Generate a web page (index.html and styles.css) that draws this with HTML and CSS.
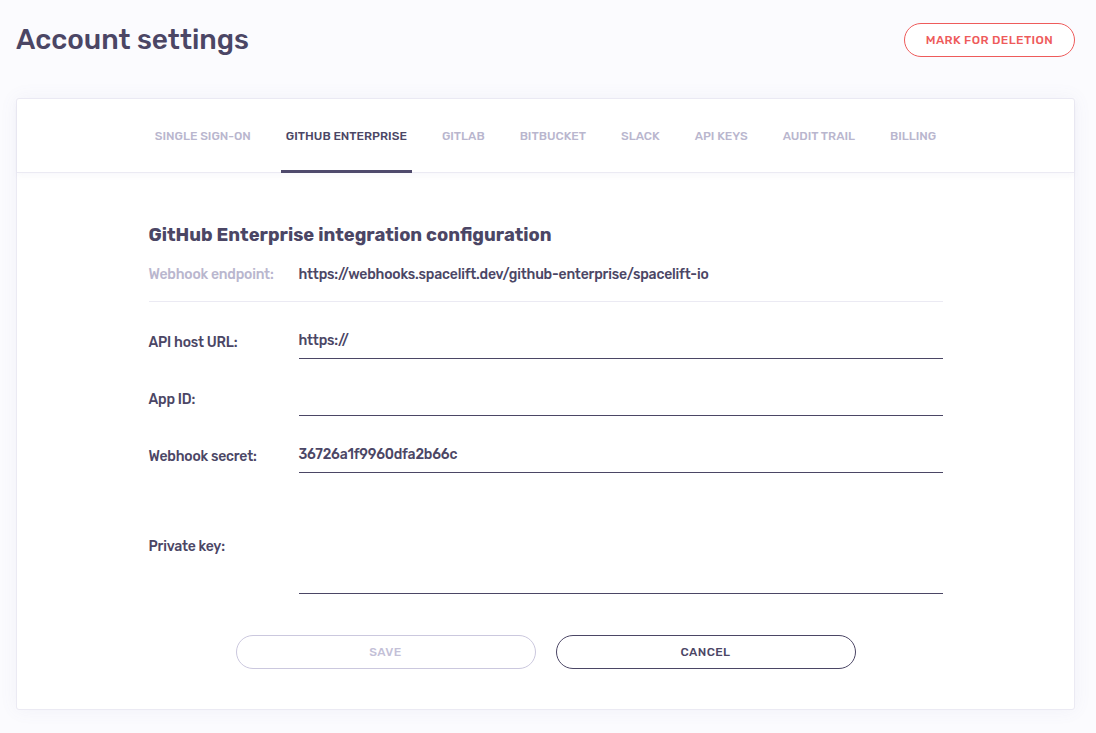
FILE: index.html
```html
<!DOCTYPE html>
<html lang="en">
<head>
<meta charset="utf-8">
<title>Account settings</title>
<link rel="stylesheet" href="styles.css">
</head>
<body>
<div class="page">
  <header class="header">
    <h1 class="title">Account settings</h1>
    <button class="btn btn-danger" type="button">Mark for deletion</button>
  </header>

  <section class="card">
    <nav class="tabs">
      <a class="tab">Single sign-on</a>
      <a class="tab tab-active">GitHub Enterprise</a>
      <a class="tab">GitLab</a>
      <a class="tab">Bitbucket</a>
      <a class="tab">Slack</a>
      <a class="tab">API keys</a>
      <a class="tab">Audit trail</a>
      <a class="tab">Billing</a>
    </nav>

    <div class="form">
      <h2 class="form-title">GitHub Enterprise integration configuration</h2>
      <div class="info-row">
        <span class="info-label">Webhook endpoint:</span>
        <span class="info-value">https://webhooks.spacelift.dev/github-enterprise/spacelift-io</span>
      </div>

      <div class="field">
        <label class="field-label">API host URL:</label>
        <div class="field-input">https://</div>
      </div>
      <div class="field">
        <label class="field-label">App ID:</label>
        <div class="field-input"></div>
      </div>
      <div class="field">
        <label class="field-label">Webhook secret:</label>
        <div class="field-input">36726a1f9960dfa2b66c</div>
      </div>
      <div class="field field-area">
        <label class="field-label">Private key:</label>
        <div class="field-input field-textarea"></div>
      </div>

      <div class="actions">
        <button class="btn btn-wide btn-disabled" type="button">Save</button>
        <button class="btn btn-wide btn-secondary" type="button">Cancel</button>
      </div>
    </div>
  </section>
</div>
</body>
</html>
```

FILE: styles.css
```css
* { box-sizing: border-box; }

html, body {
  margin: 0;
  padding: 0;
  background: #fbfbfe;
  font-family: "Rubik", Roboto, "Noto Sans", sans-serif;
  color: #4b4665;
}

.page {
  padding: 23px 21px 24px 16px;
}

.header {
  display: flex;
  align-items: center;
  justify-content: space-between;
  height: 34px;
}

.title {
  margin: 0;
  font-size: 28px;
  line-height: 34px;
  font-weight: 500;
  color: #4b4665;
}

.btn {
  font-family: inherit;
  height: 34px;
  border-radius: 17px;
  background: transparent;
  font-size: 12px;
  font-weight: 500;
  text-transform: uppercase;
  letter-spacing: 0.4px;
  cursor: pointer;
}

.btn-danger {
  width: 171px;
  border: 1px solid #ee5b5b;
  color: #ee5b5b;
  background: #fff;
}

.card {
  margin-top: 41px;
  background: #fff;
  border: 1px solid #ebeaf3;
  border-radius: 3px;
  box-shadow: 0 0 18px rgba(120, 115, 170, 0.07);
  padding-bottom: 40px;
}

.tabs {
  display: flex;
  justify-content: center;
  gap: 25px;
  height: 74px;
  border-bottom: 1px solid #ebeaf3;
  box-shadow: 0 3px 6px rgba(120, 115, 170, 0.05);
}

.tab {
  display: flex;
  align-items: center;
  padding: 2px 5px 0;
  border-bottom: 3px solid transparent;
  margin-bottom: -1px;
  font-size: 12px;
  font-weight: 500;
  text-transform: uppercase;
  color: #b9b6ce;
}

.tab-active {
  color: #4b4665;
  border-bottom-color: #4f4a6c;
}

.form {
  width: 794px;
  margin: 0 auto;
  padding-top: 50px;
}

.form-title {
  margin: 0;
  font-size: 18.4px;
  line-height: 24px;
  font-weight: 700;
  color: #4b4665;
}

.info-row {
  display: flex;
  align-items: center;
  margin-top: 18px;
  padding-bottom: 16px;
  border-bottom: 1px solid #ebeaf3;
  font-size: 14px;
  line-height: 20px;
  font-weight: 500;
  letter-spacing: -0.2px;
}

.info-label {
  width: 150px;
  color: #b9b6ce;
}

.info-value {
  color: #4b4665;
}

.field {
  display: flex;
  align-items: center;
  margin-top: 23px;
  font-size: 14px;
  font-weight: 500;
  letter-spacing: -0.2px;
}

.field:first-of-type { margin-top: 21px; }

.field-label {
  width: 150px;
  color: #4b4665;
}

.field-input {
  flex: 1;
  height: 34px;
  line-height: 32px;
  border-bottom: 1px solid #4b4665;
  color: #4b4665;
}

.field-area { margin-top: 25px; }

.field-textarea { height: 96px; }

.actions {
  display: flex;
  justify-content: center;
  gap: 20px;
  margin-top: 41px;
}

.btn-wide { width: 300px; }

.btn-disabled {
  border: 1px solid #cbc8de;
  color: #c3c0d7;
}

.btn-secondary {
  border: 1px solid #4b4665;
  color: #4b4665;
}
```
